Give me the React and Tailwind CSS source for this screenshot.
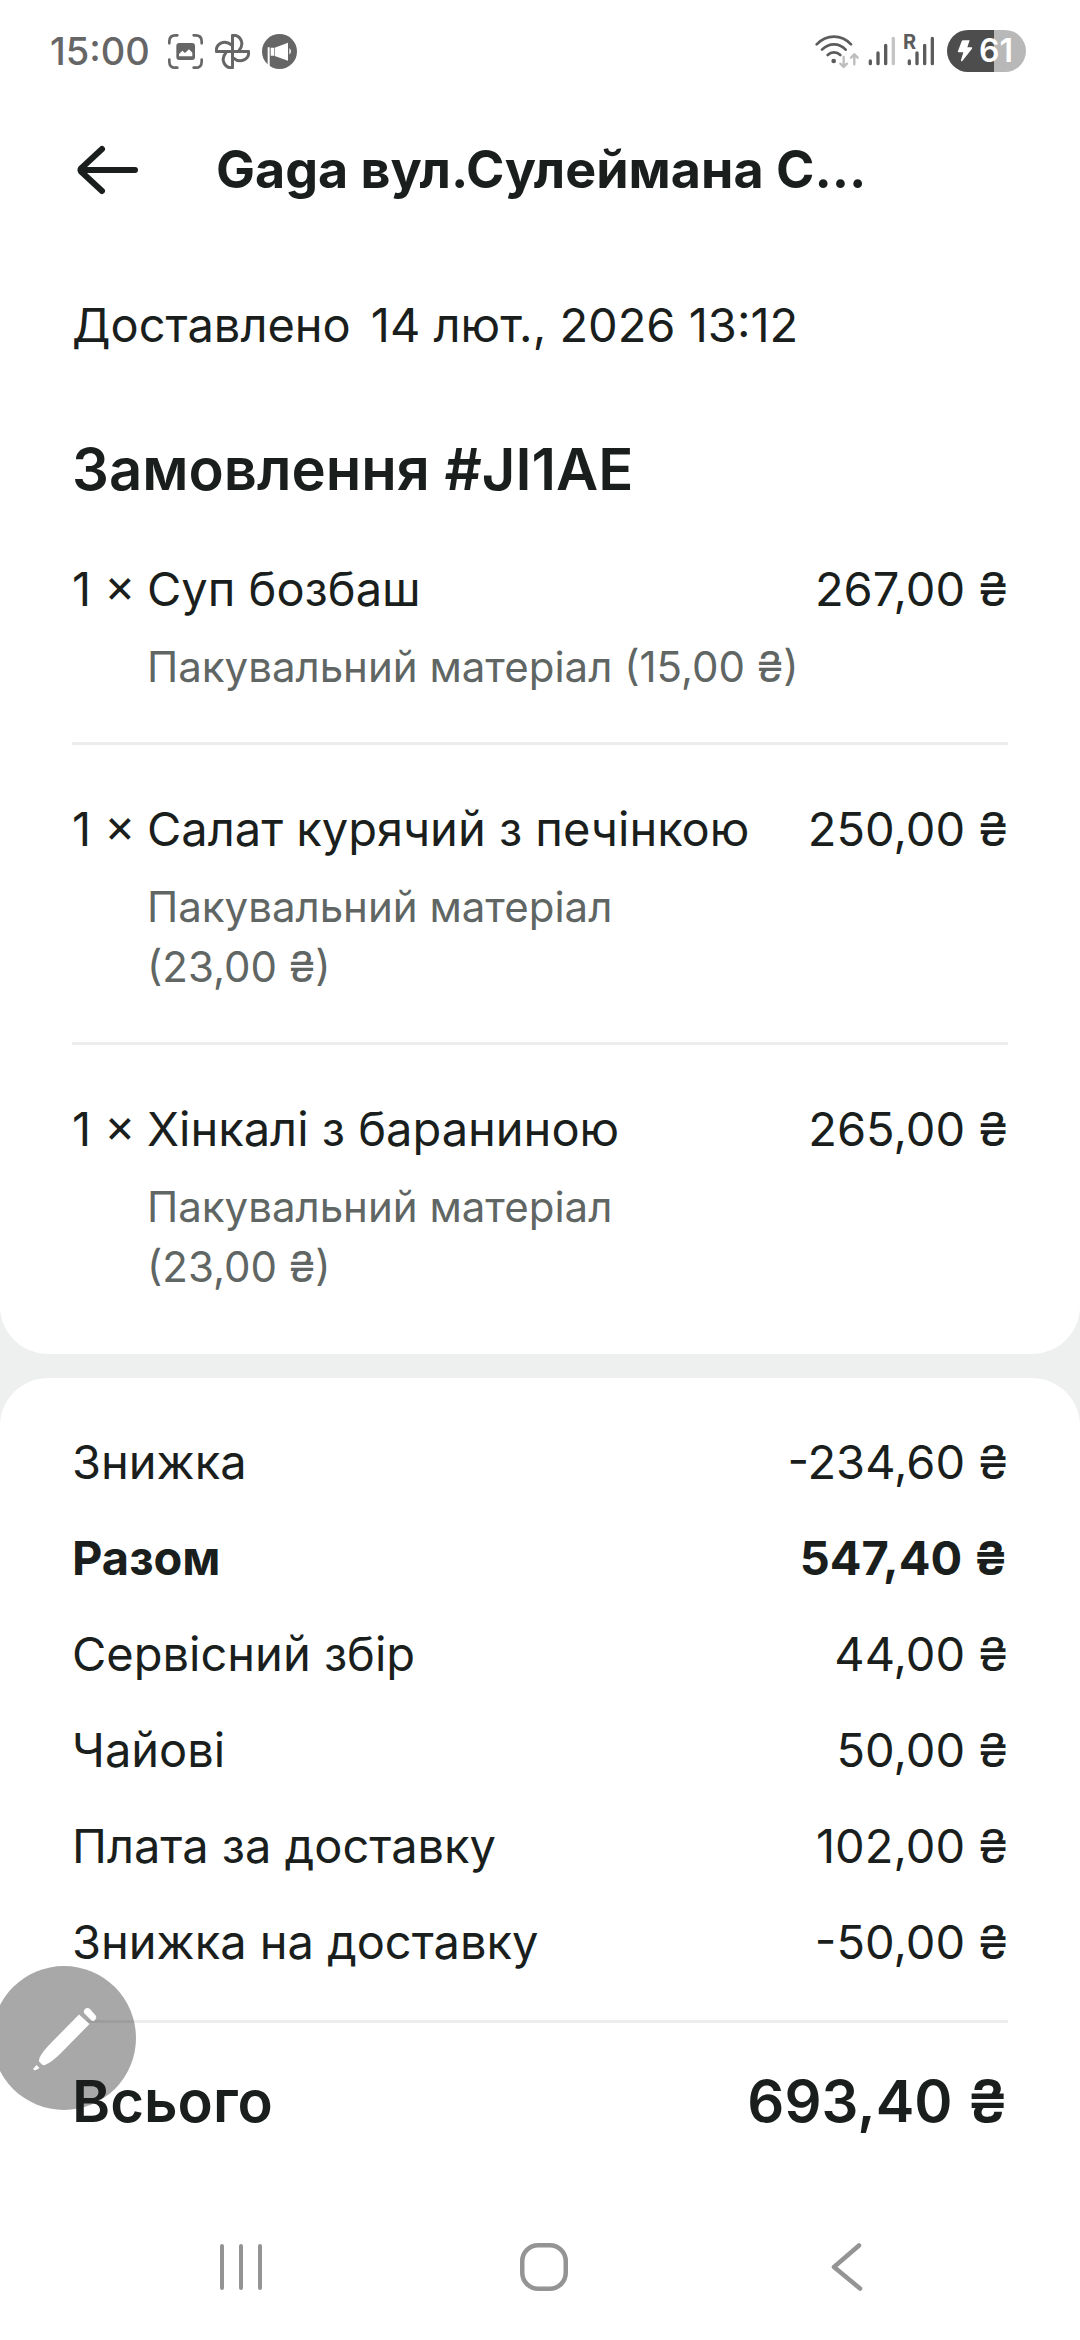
const ITEMS = [
  { qty: 1, name: "Суп бозбаш", price: "267,00 ₴", extra: "Пакувальний матеріал", extraPrice: "(15,00\u00a0₴)" },
  { qty: 1, name: "Салат курячий з печінкою", price: "250,00 ₴", extra: "Пакувальний матеріал", extraPrice: "(23,00\u00a0₴)" },
  { qty: 1, name: "Хінкалі з бараниною", price: "265,00 ₴", extra: "Пакувальний матеріал", extraPrice: "(23,00\u00a0₴)" },
];

const SUMMARY = [
  { label: "Знижка", value: "-234,60 ₴" },
  { label: "Разом", value: "547,40 ₴", bold: true },
  { label: "Сервісний збір", value: "44,00 ₴" },
  { label: "Чайові", value: "50,00 ₴" },
  { label: "Плата за доставку", value: "102,00 ₴" },
  { label: "Знижка на доставку", value: "-50,00 ₴" },
];

function ScreenshotIcon() {
  return (
    <svg className="w-[35px] h-[35px]" viewBox="0 0 105 105" fill="none">
      <path
        d="M4 28V22Q4 4 22 4H28M77 4H83Q101 4 101 22V28M101 77V83Q101 101 83 101H77M28 101H22Q4 101 4 83V77"
        stroke="#666"
        strokeWidth="8"
        strokeLinecap="round"
      />
      <rect x="25" y="27" width="56" height="51" rx="9" fill="#666" />
      <path d="M33 67V60L43 50L51 57L63 46L73 56V67Z" fill="#fff" />
    </svg>
  );
}

function PinwheelIcon() {
  const blade = "M53 53V4C76 2 92 28 72 51";
  return (
    <svg className="w-[35px] h-[35px]" viewBox="0 0 106 106" fill="none" stroke="#666" strokeWidth="9" strokeLinejoin="round">
      <path d={blade} />
      <path d={blade} transform="rotate(90 53 53)" />
      <path d={blade} transform="rotate(180 53 53)" />
      <path d={blade} transform="rotate(270 53 53)" />
    </svg>
  );
}

function MegaphoneIcon() {
  return (
    <svg className="w-[35px] h-[35px]" viewBox="0 0 105 105">
      <circle cx="52.500" cy="52.500" r="52.500" fill="#666" />
      <path d="M17 40H23V99L17 94ZM26 41H36V65H26ZM38 41L78 26V80L38 66ZM82 42Q92 52 82 62Z" fill="#fff" />
    </svg>
  );
}

function WifiIcon() {
  return (
    <svg className="w-[45px] h-[37px]" viewBox="70 65 135 111" fill="none" strokeLinecap="round" strokeWidth="8">
      <g stroke="#5c5c5c">
        <path d="M75 99Q98 76 127 76T178 99" />
        <path d="M91 115Q107 99 127 99T162 115" />
        <path d="M108 131Q116 123 127 123T146 131" />
      </g>
      <circle cx="126" cy="149" r="7" fill="#5c5c5c" />
      <g stroke="#bdbdbd" strokeWidth="7" strokeLinejoin="round">
        <path d="M156 137V167M146 157L156 167L166 157" />
        <path d="M188 159V129M178 139L188 129L198 139" />
      </g>
    </svg>
  );
}

function SignalIcon() {
  return (
    <svg className="w-[28px] h-[30px]" viewBox="0 0 84 90" fill="none" stroke="#5c5c5c" strokeWidth="10" strokeLinecap="round">
      <path d="M7 75V83M30 51V83M53 28V83" />
      <path d="M76 7V83" stroke="#c4c4c4" />
    </svg>
  );
}

function RoamingSignalIcon() {
  return (
    <span className="relative flex">
      <svg className="w-[31px] h-[30px]" viewBox="-9 0 93 90" fill="none" stroke="#5c5c5c" strokeWidth="10" strokeLinecap="round">
        <path d="M7 75V83M30 51V83M53 28V83M76 7V83" />
      </svg>
      <span className="absolute -left-px -top-1 text-xl leading-5 font-bold text-[#5c5c5c]">R</span>
    </span>
  );
}

function StatusBar() {
  return (
    <div className="flex h-[102px] items-center justify-between pl-[50px] pr-[54px]">
      <div className="flex items-center gap-3">
        <span className="mr-1.5 text-[38px] leading-10 font-medium text-[#666]">15:00</span>
        <ScreenshotIcon />
        <PinwheelIcon />
        <MegaphoneIcon />
      </div>
      <div className="flex items-center gap-3">
        <div className="flex items-center gap-2">
          <WifiIcon />
          <SignalIcon />
          <RoamingSignalIcon />
        </div>
        <div className="flex h-[42px] w-[79px] items-center gap-1.5 rounded-full bg-[linear-gradient(90deg,#4d4d4d_60%,#b8b8b8_60%)] pl-2.5 text-white">
          <svg className="h-[22px] w-4 shrink-0" viewBox="0 0 48 66" fill="#fff">
            <path d="M18 1H38L31 22H44Q47 22 45 26L16 63Q11 66 12 60L19 37H5Q1 37 3 33L14 4Q15 1 18 1Z" />
          </svg>
          <span className="text-[32px] leading-8 font-semibold">61</span>
        </div>
      </div>
    </div>
  );
}

function OrderItem({ item }) {
  return (
    <li className="border-b-3 border-[#eceeed] pt-12 pb-[45px] first:pt-0 last:border-b-0 last:pb-0">
      <div className="flex text-[47px] leading-[72px]">
        <span className="w-[75px] shrink-0 whitespace-nowrap">{item.qty} ×</span>
        <span className="flex-1">{item.name}</span>
        <span>{item.price}</span>
      </div>
      <p className="mt-3 ml-[75px] max-w-[655px] text-[42px] leading-[60px] text-[#5f6663]">
        {item.extra} {item.extraPrice}
      </p>
    </li>
  );
}

function PenButton() {
  return (
    <button aria-label="Нотатка" className="fixed -left-2 bottom-[230px] size-36 rounded-full bg-[#1a1a1a]/38">
      <svg className="size-36" viewBox="0 0 144 144" fill="#fff">
        <path d="M92 47Q91 45 93 43Q95 41 98 43L104 50Q105 52 103 54Q101 56 99 54Z" />
        <path d="M87 48.5L97.500 58L69 87Q60 96 53 99Q51 99.500 50 98.500L47.500 96Q46.500 95 47.500 92Q50 86 59 77Z" />
        <path d="M44.500 99L47.500 102L44 104Q41 105 41.500 102.500Z" />
      </svg>
    </button>
  );
}

function NavBar() {
  return (
    <nav className="flex h-[146px] items-center pl-[90px] pr-[82px]">
      <button aria-label="Останні" className="flex flex-1 justify-center">
        <svg className="size-12" viewBox="0 0 48 48" fill="none" stroke="#949494" strokeWidth="4" strokeLinecap="round">
          <path d="M5 3V45M24 3V45M43 3V45" />
        </svg>
      </button>
      <button aria-label="Головна" className="flex flex-1 justify-center">
        <svg className="size-12" viewBox="0 0 48 48" fill="none" stroke="#949494" strokeWidth="4.500">
          <rect x="2.250" y="2.250" width="43.500" height="43.500" rx="16" />
        </svg>
      </button>
      <button aria-label="Назад" className="flex flex-1 justify-center">
        <svg className="size-12" viewBox="0 0 48 48" fill="none" stroke="#949494" strokeWidth="4.500" strokeLinecap="round" strokeLinejoin="round">
          <path d="M36 2.500L11 24L37 45.500" />
        </svg>
      </button>
    </nav>
  );
}

export default function App() {
  return (
    <div className="flex min-h-screen flex-col bg-[#eef0ef] font-['Inter',sans-serif] text-[#1a1f1d]">
      {/* Order card */}
      <div className="rounded-b-[48px] bg-white pb-[57px]">
        <StatusBar />
        <header className="flex h-[136px] items-center gap-[72px] px-[72px]">
          <button aria-label="Назад" className="shrink-0">
            <svg className="size-[72px]" viewBox="0 0 72 72" fill="none" stroke="currentColor" strokeWidth="6" strokeLinecap="round" strokeLinejoin="round">
              <path d="M63 36H9M30 15L9 34.500Q8 36 9 37.500L30 57" />
            </svg>
          </button>
          <h1 className="text-[52px] leading-[60px] font-bold">Gaga вул.Сулеймана С...</h1>
        </header>

        <main className="px-[72px] pt-[51px]">
          <p className="flex gap-5 text-[47px] leading-[72px]">
            <span>Доставлено</span>
            <span>14 лют., 2026 13:12</span>
          </p>
          <h2 className="mt-[72px] text-[58px] leading-[72px] font-semibold">Замовлення #JI1AE</h2>
          <ul className="mt-12">
            {ITEMS.map((item) => (
              <OrderItem key={item.name} item={item} />
            ))}
          </ul>
        </main>
      </div>

      {/* Totals card */}
      <div className="mt-6 flex flex-1 flex-col justify-between rounded-t-[48px] bg-white pt-12">
        <section className="px-[72px]">
          <dl className="flex flex-col gap-6 border-b-3 border-[#eceeed] pb-[42px] text-[47px] leading-[72px]">
            {SUMMARY.map((row) => (
              <div key={row.label} className={`flex justify-between ${row.bold ? "font-bold" : ""}`}>
                <dt>{row.label}</dt>
                <dd>{row.value}</dd>
              </div>
            ))}
          </dl>
          <div className="flex justify-between pt-[42px] text-[58px] leading-[72px] font-semibold">
            <span>Всього</span>
            <span>693,40 ₴</span>
          </div>
        </section>
        <NavBar />
      </div>

      <PenButton />
    </div>
  );
}
